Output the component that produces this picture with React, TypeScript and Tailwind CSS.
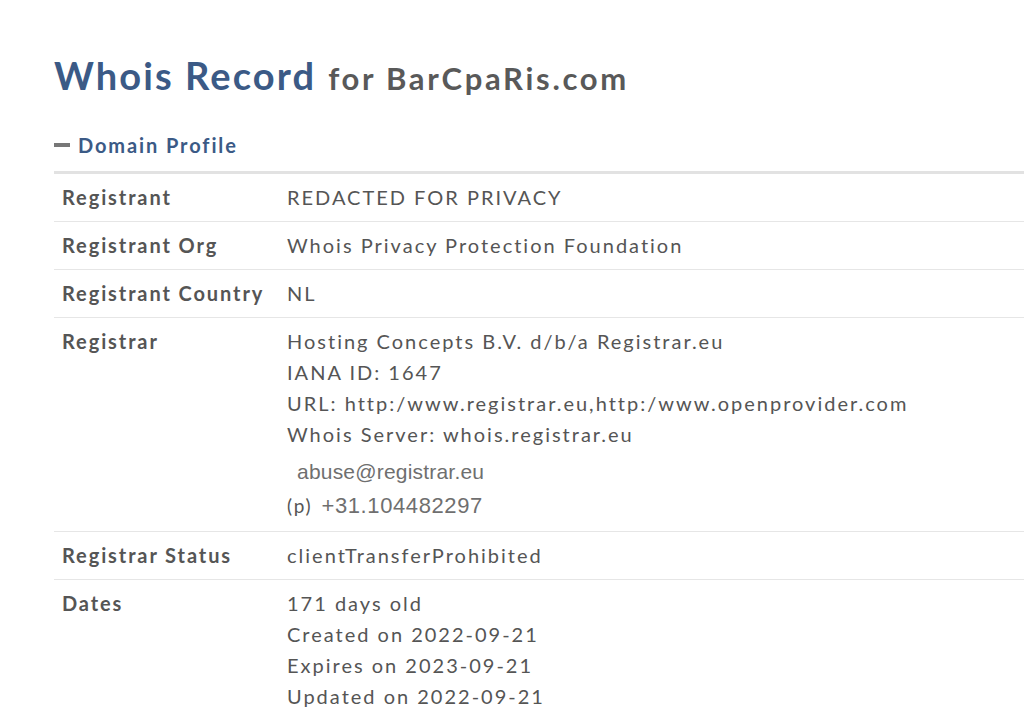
const rows: { label: string; lines: string[] }[] = [
  { label: 'Registrant', lines: ['REDACTED FOR PRIVACY'] },
  { label: 'Registrant Org', lines: ['Whois Privacy Protection Foundation'] },
  { label: 'Registrant Country', lines: ['NL'] },
]

export default function App() {
  return (
    <div
      className="min-h-[721px] w-[1024px] overflow-hidden bg-white pl-[54px] pt-[52px] text-[#555]"
      style={{ fontFamily: 'Lato, "Open Sans", sans-serif' }}
    >
      <h1 className="flex items-baseline whitespace-nowrap font-bold">
        <span className="text-[38px] leading-[46px] tracking-[2.1px] text-[#3b5a86]">Whois Record</span>
        <span className="ml-[12px] text-[31px] tracking-[2.7px] text-[#595959]">for BarCpaRis.com</span>
      </h1>

      <div className="mt-[28px] flex items-center gap-[8px] text-[20px] font-bold tracking-[1.9px] text-[#3b5a86]">
        <span className="block h-[4px] w-[16px] bg-[#777]" />
        <span>Domain Profile</span>
      </div>

      <div className="mt-[11px] w-[1100px] border-t-[3px] border-[#e2e2e2] text-[20px] tracking-[2px]">
        {rows.map((r) => (
          <div key={r.label} className="flex border-b border-[#e6e6e6] py-[8px] leading-[31px]">
            <div className="w-[233px] shrink-0 pl-[8px] font-bold tracking-[1.9px]">{r.label}</div>
            <div>{r.lines.join('')}</div>
          </div>
        ))}

        <div className="flex border-b border-[#e6e6e6] pt-[8px] pb-[9px] leading-[31px]">
          <div className="w-[233px] shrink-0 pl-[8px] font-bold tracking-[1.9px]">Registrar</div>
          <div>
            <div>Hosting Concepts B.V. d/b/a Registrar.eu</div>
            <div>IANA ID: 1647</div>
            <div>URL: http:/www.registrar.eu,http:/www.openprovider.com</div>
            <div>Whois Server: whois.registrar.eu</div>
            <div
              className="mt-[5px] pl-[10px] text-[21px] leading-[34px] tracking-[0.2px] text-[#6f6f6f]"
              style={{ fontFamily: '"Liberation Sans", Arial, sans-serif' }}
            >
              abuse@registrar.eu
            </div>
            <div className="flex items-baseline leading-[33px] tracking-normal">
              <span className="text-[19px] tracking-[1.8px]">(p)</span>
              <span
                className="ml-[9px] text-[22px] tracking-[0.6px] text-[#6f6f6f]"
                style={{ fontFamily: '"Liberation Sans", Arial, sans-serif' }}
              >
                +31.104482297
              </span>
            </div>
          </div>
        </div>

        <div className="flex border-b border-[#e6e6e6] py-[8px] leading-[31px]">
          <div className="w-[233px] shrink-0 pl-[8px] font-bold tracking-[1.9px]">Registrar Status</div>
          <div>clientTransferProhibited</div>
        </div>

        <div className="flex py-[8px] leading-[31px]">
          <div className="w-[233px] shrink-0 pl-[8px] font-bold tracking-[1.9px]">Dates</div>
          <div>
            <div>171 days old</div>
            <div>Created on 2022-09-21</div>
            <div>Expires on 2023-09-21</div>
            <div>Updated on 2022-09-21</div>
          </div>
        </div>
      </div>
    </div>
  )
}
